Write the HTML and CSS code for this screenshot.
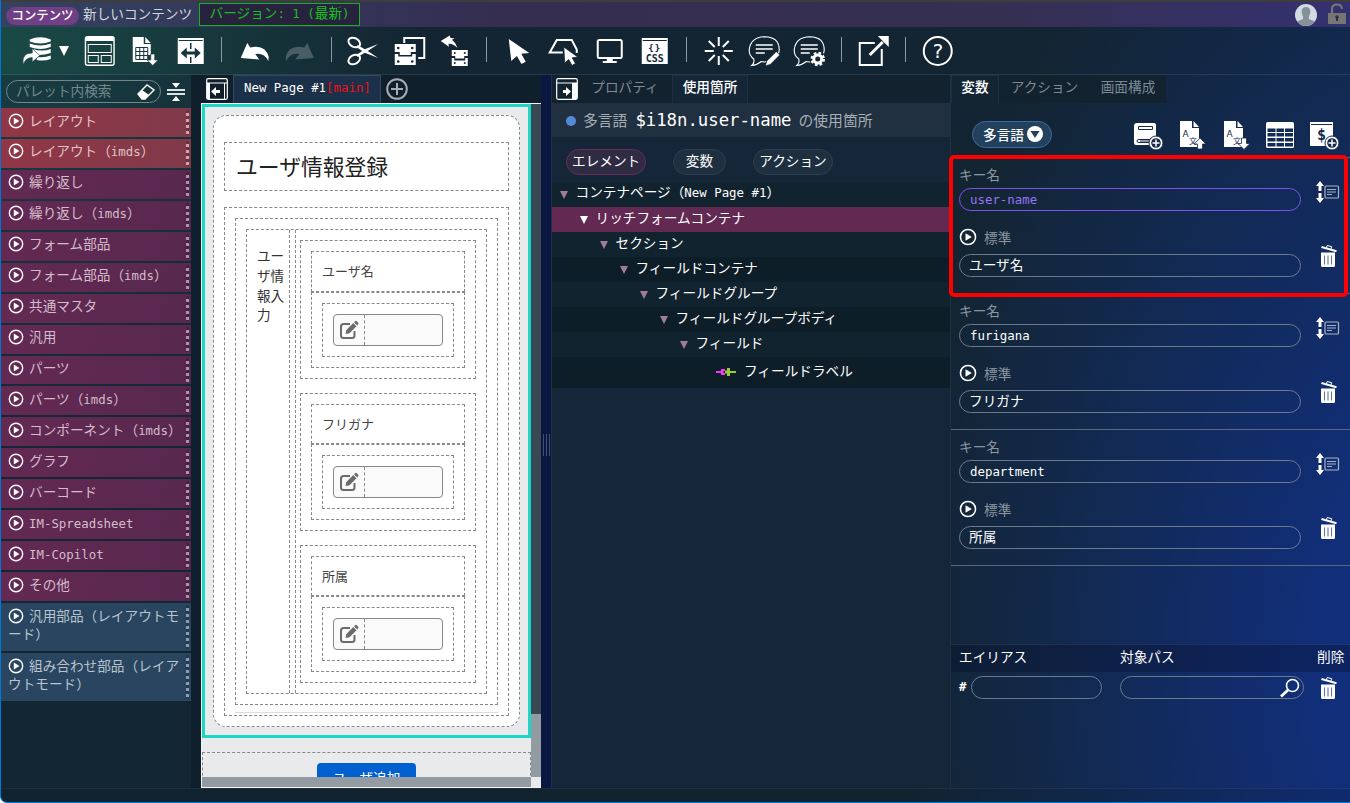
FILE: index.html
```html
<!DOCTYPE html>
<html lang="ja">
<head>
<meta charset="utf-8">
<title>新しいコンテンツ</title>
<link rel="stylesheet" href="styles.css">
</head>
<body>
<svg class="defs" aria-hidden="true">
  <symbol id="play" viewBox="0 0 16 16"><circle cx="8" cy="8" r="6.7" fill="none" stroke="currentColor" stroke-width="1.4"/><path d="M5.8 4.6v6.8L11.4 8z" fill="currentColor"/></symbol>
  <symbol id="trash" viewBox="0 0 18 24"><path d="M2 8.500h14v13q0 1.500-1.500 1.500h-11q-1.500 0-1.500-1.500z" fill="currentColor"/><path d="M5.500 11.500v9M9 11.500v9M12.500 11.500v9" stroke="#66759a" stroke-width="1.100"/><path d="M2.500 3l15 4.300" stroke="currentColor" stroke-width="2"/><path d="M7.500 3.800l.7-2.300 4.500 1.200-.7 2.500" fill="none" stroke="currentColor"/></symbol>
  <symbol id="sort" viewBox="0 0 24 22"><path d="M4 0l4 5H5.500v5h-3V5H0zM2.500 12h3v5H8l-4 5-4-5h2.500z" fill="currentColor"/><rect x="9" y="5" width="13.500" height="12" rx="1" fill="none" stroke="#a9b4c4" stroke-width="1.200"/><path d="M11 8.500h9M11 11h9M11 13.500h5" stroke="#a9b4c4"/></symbol>
  <symbol id="edit" viewBox="0 0 20 20"><path d="M11 4H4.500Q2 4 2 6.500v9Q2 18 4.500 18H13q2.500 0 2.500-2.500V11" fill="none" stroke="currentColor" stroke-width="2"/><path d="M6.500 14l.8-4 7-7 3.200 3.200-7 7zM15 2.300l1.300-1.300q.6-.5 1.200 0l1.800 1.800q.5.600 0 1.200L18.100 5.500z" fill="currentColor"/></symbol>
</svg>

<div class="app">
<header class="titlebar">
  <span class="badge">コンテンツ</span>
  <span class="doc-title">新しいコンテンツ</span>
  <span class="version">バージョン<i class="m">: 1 (</i>最新<i class="m">)</i></span>
  <span class="grow"></span>
  <svg class="avatar" viewBox="0 0 22 22"><defs><clipPath id="avatar-clip"><circle cx="11" cy="11" r="11"/></clipPath></defs><g clip-path="url(#avatar-clip)"><path fill="#d3dae2" d="M0 0h22v22H0z"/><path fill="#84919b" d="M11 3c3 0 4.600 2 4.400 5-.1 2-1 3-1.500 4.500v2.500l6 2.500v5H2v-5l6-2.500v-2.500C7.500 11 6.700 10 6.600 8 6.400 5 8 3 11 3z"/></g></svg>
  <svg class="lock" viewBox="0 0 20 22"><path d="M5 10V6q0-4.500 5-4.500Q14.500 1.500 15 6" fill="none" stroke="#777673" stroke-width="2"/><path fill="#777673" d="M1 10h18v11H1z"/><circle cx="10" cy="14" r="1.800" fill="#2c2b5e"/><path d="M9 14h2v4H9z" fill="#2c2b5e"/></svg>
</header>

<nav class="toolbar">
  <svg viewBox="21 35 32 32"><path d="M30 39.500q10.500-4.500 21 0v2q-10.500 4-21 0zM30 43.500q10.500 4 21 0v3.500q-10.500 4-21 0zM33 49q9 3 18 0v4q-6 2-12 2zM37 57q8 1 14-1.500v3.500q-7 2.500-14 1z"/><path d="M23.500 64.500q-2-11.500 9-11.500v-4.500l7.500 7-7.500 6.500v-4.500q-6.500 0-9 7z" stroke="#183c3f" stroke-width=".6"/></svg>
  <svg class="caret" viewBox="0 0 10 10"><path d="M0 0h10L5 10z"/></svg>
  <svg viewBox="84 35 32 32"><g fill="none" stroke="#fff"><rect x="85.700" y="36.700" width="28.600" height="28.600" rx="2" stroke-width="1.400"/><rect x="88.500" y="44.500" width="23" height="8"/><rect x="88.500" y="55.500" width="10" height="7"/><rect x="101.500" y="55.500" width="10" height="7"/></g><path d="M86 37h28v4H86z"/></svg>
  <svg viewBox="130 35 32 32"><path d="M134 37h11v7h7v11h-3v5h3v2h-18z"/><path d="M146.500 37l5.500 6h-5.500z"/><path d="M137 47.500h12v12h-12zM137 51.500h12M137 55.500h12M141 47.500v12M145 47.500v12" fill="none" stroke="#17373d"/><path d="M152 54h4v6h3.500L154 65.500 148.500 60h3.500z" stroke="#17373d" stroke-width=".7"/></svg>
  <svg viewBox="175 35 32 32"><path d="M178 38h26v26h-26z"/><path d="M179 40.500h24" stroke="#17353c"/><path d="M191 43v6M191 57v6" stroke="#17353c" stroke-width="1.500"/><path d="M181 53l6-5.500v4h8v-4l6 5.500-6 5.500v-4h-8v4z" fill="#17353c"/></svg>
  <i class="sep"></i>
  <svg viewBox="239 35 32 32"><path d="M241 58l6.500-15 3 4.500q15-3.500 18.500 9.500l-.5 4q-4-8.500-13-7l4 5.500z"/></svg>
  <svg class="off" viewBox="284 35 32 32"><path d="M314 58l-6.500-15-3 4.500q-15-3.500-18.500 9.500l.5 4q4-8.500 13-7l-4 5.500z"/></svg>
  <i class="sep"></i>
  <svg viewBox="348 35 32 32"><g fill="none" stroke="#fff" stroke-width="2"><ellipse cx="354.500" cy="42.500" rx="6.200" ry="4.300" transform="rotate(28 354.500 42.500)"/><ellipse cx="354.500" cy="59.500" rx="6.200" ry="4.300" transform="rotate(-28 354.500 59.500)"/></g><path d="M358 45l7 4.300 13.500-5.300-10.500 7 10.500 7-13.500-5.300-7 4.300-1.500-2 6-4-6-4z"/></svg>
  <svg viewBox="393 35 32 32"><path d="M403.500 43v-5h20v20h-6" fill="none" stroke="#fff" stroke-width="2"/><path d="M394 44h21v8h-5v3h-11v-3H394zM394 54h3.500v2.500h14V54h3.500v11h-21z"/><g fill="#142b36"><circle cx="397.500" cy="48" r="1.300"/><circle cx="411.500" cy="48" r="1.300"/><circle cx="397.500" cy="61.500" r="1.300"/><circle cx="411.500" cy="61.500" r="1.300"/></g></svg>
  <svg viewBox="439 35 32 32"><path d="M441 41l9-5.500.7 2.500 4 .2-2.500 1.500q4 3 5.500 8-5-4.500-9-4l.5 3z"/><path d="M452 50h16v6h-3.500v2.500h-9V56H452zM452 58h2.500v2.500h11V58h2.500v8h-16z"/><g fill="#142b36"><circle cx="455" cy="53" r="1"/><circle cx="465" cy="53" r="1"/><circle cx="455" cy="63" r="1"/><circle cx="465" cy="63" r="1"/></g></svg>
  <i class="sep"></i>
  <svg viewBox="503 35 32 32"><path d="M509 39l20.500 14-8 .7 4.500 8-4.300 2.300-4.500-8-5.700 5z"/></svg>
  <svg viewBox="549 35 32 32"><path d="M564 52.500h-13l7-12.500h15l5 9.500v3.500" fill="none" stroke="#fff" stroke-width="2"/><path d="M565 47l14 10-5.500.8 3.200 5.700-3.500 2-3.200-6-4 3.500z" stroke="#132733" stroke-width=".8"/></svg>
  <svg viewBox="594 35 32 32"><rect x="598" y="40" width="24" height="18" rx="1.500" fill="none" stroke="#fff" stroke-width="2"/><path d="M607 59h6v2h4v2h-14v-2h4z"/></svg>
  <svg viewBox="639 35 32 32"><path d="M642 38h26v26h-26z"/><path d="M643 40.500h24" stroke="#132733"/><text x="655" y="51" class="ico-brace">{}</text><text x="655" y="62" class="ico-css">CSS</text></svg>
  <i class="sep"></i>
  <svg viewBox="703 35 32 32"><path d="M719 37v9M719 56v9M705 51h9M724 51h9M709 41l6 6M723 55l6 6M729 41l-6 6M715 55l-6 6" stroke="#fff" stroke-width="2"/></svg>
  <svg viewBox="749 35 32 32"><path d="M754 59q-5-3.500-4.500-9.500Q751 37 765 36.700 779.500 37 779.500 50q-1 11-15 12l-3-.5q-4 3.500-9.500 4 3-2.500 2-6.500z" fill="none" stroke="#fff" stroke-width="1.100"/><path d="M756 45h17M756 49h17M756 53h9" stroke="#fff" stroke-width="1.700"/><path d="M765.500 66l1.500-5 9.500-9.500 3.500 3.500-9.500 9.500z" stroke="#132733" stroke-width=".8"/></svg>
  <svg viewBox="795 35 32 32"><path d="M800 59q-5-3.500-4.500-9.500Q797 37 811 36.700 825.500 37 825.500 50q-1 11-15 12l-3-.5q-4 3.500-9.500 4 3-2.500 2-6.500z" fill="none" stroke="#fff" stroke-width="1.100"/><path d="M802 45h17M802 49h17M802 53h9" stroke="#fff" stroke-width="1.700"/><circle cx="819" cy="59" r="8" fill="#132733"/><circle cx="819" cy="59" r="6" fill="none" stroke="#fff" stroke-width="2.500" stroke-dasharray="2.600 2.112"/><circle cx="819" cy="59" r="4" fill="none" stroke="#fff" stroke-width="3"/></svg>
  <i class="sep"></i>
  <svg viewBox="858 35 32 32"><path d="M875 43h-15v22h22V49" fill="none" stroke="#fff" stroke-width="2"/><path d="M870 55l13-13" stroke="#fff" stroke-width="3"/><path d="M878 36h11v11z"/></svg>
  <i class="sep"></i>
  <svg viewBox="922 35 32 32"><circle cx="938" cy="51" r="14" fill="none" stroke="#fff" stroke-width="2"/><text x="938" y="58" class="ico-help">?</text></svg>
</nav>

<main class="work">
  <aside class="palette">
    <div class="search-row">
      <div class="search"><span>パレット内検索</span><svg viewBox="0 0 18 16"><path d="M1 10L10 1l7 5-9 9H5z" fill="none" stroke="#fff" stroke-width="1.400"/><path d="M1 10l4-4 7 5-4 4H5z" fill="#fff"/></svg></div>
      <svg class="collapse" viewBox="0 0 18 18"><path d="M5 0h8L9 5zM5 18h8L9 13z" fill="#fff"/><path d="M0 7h18M0 11h18" stroke="#dce3e5" stroke-width="2"/></svg>
    </div>
    <ul class="groups">
      <li class="red"><svg><use href="#play"/></svg>レイアウト</li>
      <li class="red"><svg><use href="#play"/></svg>レイアウト（<i class="m">imds</i>）</li>
      <li><svg><use href="#play"/></svg>繰り返し</li>
      <li><svg><use href="#play"/></svg>繰り返し（<i class="m">imds</i>）</li>
      <li><svg><use href="#play"/></svg>フォーム部品</li>
      <li><svg><use href="#play"/></svg>フォーム部品（<i class="m">imds</i>）</li>
      <li><svg><use href="#play"/></svg>共通マスタ</li>
      <li><svg><use href="#play"/></svg>汎用</li>
      <li><svg><use href="#play"/></svg>パーツ</li>
      <li><svg><use href="#play"/></svg>パーツ（<i class="m">imds</i>）</li>
      <li><svg><use href="#play"/></svg>コンポーネント（<i class="m">imds</i>）</li>
      <li><svg><use href="#play"/></svg>グラフ</li>
      <li><svg><use href="#play"/></svg>バーコード</li>
      <li><svg><use href="#play"/></svg><i class="m">IM-Spreadsheet</i></li>
      <li><svg><use href="#play"/></svg><i class="m">IM-Copilot</i></li>
      <li><svg><use href="#play"/></svg>その他</li>
      <li class="blue"><svg><use href="#play"/></svg>汎用部品（レイアウトモ<br>ード）</li>
      <li class="blue"><svg><use href="#play"/></svg>組み合わせ部品（レイア<br>ウトモード）</li>
    </ul>
  </aside>
  <div class="gutter"></div>

  <section class="center">
    <div class="tabs">
      <svg class="dock" viewBox="0 0 22 22"><rect x=".7" y=".7" width="20.600" height="20.600" rx="1.500" fill="none" stroke="#fff" stroke-width="1.200"/><path d="M1 5h20M18.500 5v16" stroke="#fff" fill="none"/><path d="M1 5h3v16H1zM5 13.500l5-4.500v3h4v3h-4v3z" fill="#fff"/></svg>
      <div class="page-tab"><i class="m">New Page #1</i><i class="m main">[main]</i></div>
      <svg class="add" viewBox="0 0 22 22"><g fill="none" stroke="#a5acb1" stroke-width="2"><circle cx="11" cy="11" r="9.800"/><path d="M11 5v12M5 11h12"/></g></svg>
    </div>
    <div class="viewport">
      <div class="canvas">
        <div class="selected">
          <div class="card">
            <div class="dash heading">ユーザ情報登録</div>
            <div class="dash form">
              <div class="dash section">
                <div class="dash field-container">
                  <div class="side">ユー<br>ザ情<br>報入<br>力</div>
                  <div class="group-body">
                    <div class="dash group"><div class="dash label">ユーザ名</div><div class="dash cell"><div class="dash wrap"><div class="input"><span><svg><use href="#edit"/></svg></span></div></div></div></div>
                    <div class="dash group"><div class="dash label">フリガナ</div><div class="dash cell"><div class="dash wrap"><div class="input"><span><svg><use href="#edit"/></svg></span></div></div></div></div>
                    <div class="dash group"><div class="dash label">所属</div><div class="dash cell"><div class="dash wrap"><div class="input"><span><svg><use href="#edit"/></svg></span></div></div></div></div>
                  </div>
                </div>
              </div>
              <div class="rule"></div>
            </div>
          </div>
        </div>
        <div class="dash footer-box"><div class="submit">ユーザ追加</div></div>
      </div>
      <div class="vbar"><div class="vthumb"></div></div>
      <div class="hbar"></div>
      <div class="corner"></div>
    </div>
  </section>
  <div class="splitter"><i></i></div>

  <section class="usage">
    <div class="tabs">
      <svg class="dock" viewBox="0 0 22 22"><rect x=".7" y=".7" width="20.600" height="20.600" rx="1.500" fill="none" stroke="#fff" stroke-width="1.200"/><path d="M1 5h20" stroke="#fff"/><path d="M16 5h5v16h-5zM15 13.500L10 9v3H7v3h3v3z" fill="#fff"/></svg>
      <div class="tab props">プロパティ</div><div class="tab on places">使用箇所</div>
    </div>
    <div class="usage-head"><b></b><span>多言語</span><i class="m">$i18n.user-name</i><span>の使用箇所</span></div>
    <div class="chips"><span class="chip hot">エレメント</span><span class="chip">変数</span><span class="chip">アクション</span></div>
    <div class="tree">
      <div class="row l0"><s></s><span>コンテナページ（<i class="m">New Page #1</i>）</span></div>
      <div class="row l1 sel"><s></s>リッチフォームコンテナ</div>
      <div class="row l2"><s></s>セクション</div>
      <div class="row l3 odd"><s></s>フィールドコンテナ</div>
      <div class="row l4"><s></s>フィールドグループ</div>
      <div class="row l5 odd"><s></s>フィールドグループボディ</div>
      <div class="row l6"><s></s>フィールド</div>
      <div class="row leaf odd"><svg viewBox="0 0 20 10"><path d="M0 4h5V2h4v2H7.500v2H9v2H5V6H0z" fill="#f53df5"/><path d="M9 3.500h2V1h3v3h6v2h-6v3h-3V6.500H9z" fill="#9acd32"/></svg>フィールドラベル</div>
    </div>
  </section>

  <section class="vars">
    <div class="tabs"><div class="tab on v1">変数</div><div class="tab v2">アクション</div><div class="tab v3">画面構成</div></div>
    <div class="var-tools">
      <div class="lang">多言語<svg viewBox="0 0 16 16"><circle cx="8" cy="8" r="8" fill="#fff"/><path d="M3.500 5h9L8 12z" fill="#23405c"/></svg></div>
      <svg class="t1" viewBox="1133 120 32 32"><path d="M1137 123h17q2 0 2 2v20h-20q-2 0-2-2v-17q0-3 3-3z"/><path d="M1138.500 126.500h14v3h-14zM1155 139.500h-16q-2 0-2 1.500t2 1.500h16M1140 141h13" fill="none" stroke="#14294b"/><circle cx="1156" cy="143" r="7" stroke="#14294b"/><circle cx="1156" cy="143" r="4.800" fill="#14294b"/><path d="M1156 139.500v7M1152.500 143h7" stroke="#fff" stroke-width="1.500"/></svg>
      <svg class="t2" viewBox="1178 120 32 32"><path d="M1180 121h12v7h7v19h-19z"/><path d="M1193.500 121l5.500 6h-5.500z"/><text x="1182.500" y="137" class="ico-a">A</text><text x="1189" y="143.500" class="ico-k">文</text><path d="M1200 138l6 6h-3.500v5h-5v-5h-3.500z" stroke="#14294b" stroke-width=".8"/></svg>
      <svg class="t3" viewBox="1222 120 32 32"><path d="M1224 121h12v7h7v19h-19z"/><path d="M1237.500 121l5.500 6h-5.500z"/><text x="1226.500" y="137" class="ico-a">A</text><text x="1233" y="143.500" class="ico-k">文</text><path d="M1244 149.500l6-6h-3.500v-5.500h-5v5.500h-3.500z" stroke="#14294b" stroke-width=".8"/></svg>
      <svg class="t4" viewBox="1264 120 32 32"><rect x="1266" y="122" width="28" height="26" rx="1.500"/><path d="M1267.500 128.500h8v3.500h-8zM1276.500 128.500h7.500v3.500h-7.500zM1285 128.500h8v3.500h-8zM1267.500 133h8v3.500h-8zM1276.500 133h7.500v3.500h-7.500zM1285 133h8v3.500h-8zM1267.500 138h8v3.500h-8zM1276.500 138h7.500v3.500h-7.500zM1285 138h8v3.500h-8zM1267.500 143h8v3.500h-8zM1276.500 143h7.500v3.500h-7.500zM1285 143h8v3.500h-8z" fill="#132b57"/></svg>
      <svg class="t5" viewBox="1308 120 32 32"><path d="M1310 122h23v24h-23z"/><path d="M1311 124.500h21" stroke="#14294b"/><text x="1321.500" y="140" class="ico-d">$</text><circle cx="1332" cy="143" r="7" stroke="#14294b"/><circle cx="1332" cy="143" r="4.800" fill="#14294b"/><path d="M1332 139.500v7M1328.500 143h7" stroke="#fff" stroke-width="1.500"/></svg>
    </div>
    <div class="entries">
      <div class="entry first"><div class="fields"><label>キー名</label><div class="box key active"><i class="m">user-name</i></div><div class="std"><svg><use href="#play"/></svg>標準</div><div class="box">ユーザ名</div></div><div class="acts"><svg class="sort"><use href="#sort"/></svg><svg class="trash"><use href="#trash"/></svg></div></div>
      <div class="entry"><div class="fields"><label>キー名</label><div class="box key"><i class="m">furigana</i></div><div class="std"><svg><use href="#play"/></svg>標準</div><div class="box">フリガナ</div></div><div class="acts"><svg class="sort"><use href="#sort"/></svg><svg class="trash"><use href="#trash"/></svg></div></div>
      <div class="entry"><div class="fields"><label>キー名</label><div class="box key"><i class="m">department</i></div><div class="std"><svg><use href="#play"/></svg>標準</div><div class="box">所属</div></div><div class="acts"><svg class="sort"><use href="#sort"/></svg><svg class="trash"><use href="#trash"/></svg></div></div>
      <div class="callout"></div>
    </div>
    <div class="alias-head"><span>エイリアス</span><span>対象パス</span><span>削除</span></div>
    <div class="alias-row"><i class="m hash">#</i><div class="box a1"></div><div class="box a2"><svg viewBox="0 0 20 20"><circle cx="12.500" cy="7.500" r="6" fill="none" stroke="#fff" stroke-width="1.600"/><path d="M8 12l-7 6.500" stroke="#fff" stroke-width="2.800"/></svg></div><svg class="trash"><use href="#trash"/></svg></div>
  </section>
</main>
<footer class="status"></footer>
</div>
</body>
</html>
```
FILE: styles.css
```css
* { box-sizing: border-box; }
body { margin: 0; width: 1350px; height: 803px; overflow: hidden; background: #fff; }
.defs { display: none; }
svg { display: block; flex: none; }
i { font-style: normal; }
.grow { flex: 1; }
.app {
  height: 803px; display: flex; flex-direction: column;
  border-left: 1px solid #0078d7; border-bottom: 1px solid #0078d7; border-radius: 0 0 0 7px;
  overflow: hidden; color: #fff;
  font: 13.65px/18px "Noto Sans CJK JP", sans-serif; white-space: nowrap;
  background:
    radial-gradient(ellipse 420px 420px at 0 50px, #1a4a46 0%, rgba(26,74,70,0) 100%),
    radial-gradient(ellipse 540px 900px at 1440px 660px, #113084 0%, rgba(17,48,132,.85) 25%, rgba(17,48,132,0) 100%),
    #132532;
}
.m { font-family: "DejaVu Sans Mono", monospace; font-size: 12.4px; }

/* title bar */
.titlebar {
  height: 27px; flex: none; display: flex; align-items: center; padding-left: 5px; padding-top: 2px;
  border-top: 2px solid #3d3d3f;
  background: linear-gradient(90deg, #34425f 0, #333256 380px, #352e50 500px, #352f51 1000px, #343170 1350px);
}
.badge { width: 73px; height: 18px; margin-top: 1px; border-radius: 9px; background: #713f86; text-align: center; font-weight: 500; font-size: 12.4px; line-height: 16px; }
.doc-title { margin-left: 4px; width: 116px; color: #d4d6de; line-height: 20px; margin-top: -6px; }
.version { height: 23px; width: 161px; margin-top: -2px; border: 1px solid #16b31b; background: #27233f; color: #14c419; text-align: center; line-height: 17px; }
.avatar { width: 22px; height: 22px; margin: -2px 10px 0 0; }
.lock { width: 20px; height: 22px; margin: -3px 3px 0 0; }

/* toolbar */
.toolbar { height: 48px; flex: none; display: flex; align-items: center; padding-left: 12.500px; border-bottom: 1px solid rgba(255,255,255,.09); }
.toolbar svg { width: 45.5px; height: 32px; fill: #fff; }
.toolbar .caret { width: 10px; height: 10px; margin: 0 7.5px 0 .3px; }
.toolbar .off { opacity: .22; }
.sep { width: 18.4px; height: 25px; flex: none; margin-top: -2px; background: linear-gradient(#8d999f, #8d999f) 8px 0 / 1px 100% no-repeat; }
.ico-brace { font: 700 9px "DejaVu Sans Mono", monospace; text-anchor: middle; letter-spacing: 1px; fill: #132733; }
.ico-css { font: 700 10px "DejaVu Sans Mono", monospace; text-anchor: middle; fill: #132733; }
.ico-help { font: 400 20px "DejaVu Sans Mono", monospace; text-anchor: middle; }

.work { height: 713px; flex: none; display: flex; }
.status { flex: 1; background: rgba(10,25,35,.12); border-top: 1px solid rgba(255,255,255,.06); }

/* palette */
.palette { width: 190px; background: rgba(20,40,58,.35); }
.search-row { display: flex; height: 33px; padding: 5px 0 0 5px; }
.search { width: 155px; height: 23px; border: 1px solid #75868a; border-radius: 12px; padding: 0 5px 0 9px; display: flex; justify-content: space-between; align-items: center; color: #76888c; line-height: 20px; }
.search span { margin-top: -4px; }
.search svg { width: 18px; height: 16px; }
.collapse { width: 18px; height: 18px; margin: 3px 0 0 6px; }
.groups { list-style: none; margin: 0; padding: 0; }
.groups li {
  min-height: 28.95px; margin-bottom: 2px; padding: 2.500px 8px 0 7px; color: #d4bccb; line-height: 18.500px;
  background: repeating-linear-gradient(rgba(0,0,0,.18) 0 3px, #b192ad 3px 6px) 185px 2px / 3px calc(100% - 4px) no-repeat, linear-gradient(110deg, #642953, #57284f);
}
.groups li.red { color: #e2c3c7; background: repeating-linear-gradient(rgba(0,0,0,.18) 0 3px, #d3a5ac 3px 6px) 185px 2px / 3px calc(100% - 4px) no-repeat, linear-gradient(100deg, #923646, #7f3a4a); }
.groups li.blue { min-height: 48px; color: #b8c4ce; background: repeating-linear-gradient(rgba(0,0,0,.18) 0 3px, #8ba0b0 3px 6px) 185px 2px / 3px calc(100% - 4px) no-repeat, #294560; }
.groups svg { display: inline-block; width: 16px; height: 16px; vertical-align: -3px; margin-right: 5px; color: #fff; }
.gutter { width: 10px; background: #0f1f2c; }

/* page canvas */
.center { width: 340px; display: flex; flex-direction: column; }
.tabs { height: 28px; flex: none; display: flex; }
.center .tabs { background: #0f1f2c; }
.dock { width: 22px; height: 22px; margin-top: 3px; }
.center .dock { margin-left: 5px; }
.page-tab { width: 148px; margin-left: 5px; padding-left: 10px; border: 1px solid #33485c; border-bottom: 0; background: #1b3049; line-height: 21px; }
.main { color: #f10f17; }
.add { width: 22px; height: 22px; margin: 3px 0 0 5px; }
.viewport { height: 685px; display: grid; grid-template: 673px 10px / 329px 10px; border: solid #f2f4f5; border-width: 1px 0 1px 1px; background: #e8eaec; color: #333; }
.canvas { overflow: hidden; background: #e8eaec; }
.selected { height: 634px; border: 3px solid #1dd6c4; padding: 8px; }
.card { height: 612px; background: #fff; border: 1px dashed #888; border-radius: 13px; padding: 26px 10px 0; }
.dash { border: 1px dashed #888; }
.heading { height: 49px; padding-left: 11px; font-size: 21.800px; line-height: 46px; color: #222; }
.form { height: 509px; margin-top: 16px; padding: 10px 10px 0; }
.section { height: 487px; padding: 10px 10px 0; }
.field-container { height: 465px; display: flex; }
.side { width: 43px; padding: 16px 0 0 10px; border-right: 1px dashed #888; font-size: 13.600px; line-height: 19.800px; }
.group-body { margin-left: 5px; border-left: 1px dashed #888; padding: 10.200px 0 0 4px; }
.group { width: 176px; height: 138.400px; margin-bottom: 14px; padding: 10px 10px 0; }
.label { height: 40.400px; padding-left: 10px; font-size: 13px; line-height: 37px; color: #444; }
.cell { height: 76px; padding: 10px 10px 0; }
.wrap { height: 54px; padding: 10px 10px 0; }
.input { height: 32px; border: 1px solid #888; border-radius: 4px; background: #fafafa; }
.input span { display: block; width: 31px; height: 30px; border-right: 1px dashed #888; padding: 5px 0 0 5px; }
.input svg { width: 20px; height: 20px; color: #6b6b6b; }
.rule { height: 1px; margin-top: 7px; background: #dcdcdc; }
.footer-box { margin-top: 14px; height: 60px; padding-top: 10px; }
.submit { width: 99px; height: 32px; margin: 0 auto; border-radius: 4px; background: #0060cf; color: #fff; text-align: center; font-size: 13.600px; line-height: 28px; }
.vbar { background: #384855; padding-top: 610px; }
.vthumb { height: 63px; background: #939ba2; }
.hbar { background: #939ba2; }
.corner { background: #e8eaec; }
.splitter { width: 10px; background: #0a1742; display: flex; align-items: center; justify-content: center; }
.splitter i { width: 7px; height: 22px; margin-top: 26px; background: repeating-linear-gradient(90deg, #44506f 0 1px, transparent 1px 3px); }

/* usage panel */
.usage { width: 400px; background: #142637; border-left: 1px solid #202f41; border-right: 1px solid #202f41; }
.usage .tabs { background: #12222f; padding-left: 4px; }
.tab { color: #7e8a93; line-height: 22px; text-align: center; }
.tab.on { color: #fff; font-weight: 500; background: #142637; border: 1px solid #213040; border-bottom: 0; line-height: 20px; }
.props { width: 94px; }
.places { width: 76px; }
.usage-head { height: 34px; background: #203040; display: flex; align-items: center; padding-left: 14px; color: #a5adb5; font-size: 14.800px; }
.usage-head b { width: 10px; height: 10px; border-radius: 5px; background: #528cd6; margin-right: 7px; margin-top: 2px; }
.usage-head .m { font-size: 17.300px; color: #fff; margin: 0 7px 0 8px; }
.chips { height: 45px; display: flex; padding: 12px 0 0 14px; gap: 27px; }
.chip { height: 26px; padding: 0 5px; width: 80px; border: 1px solid #2e3f4f; border-radius: 13px; background: #1e2f40; text-align: center; line-height: 20px; }
.chip:nth-child(2) { width: 53px; }
.chip.hot { background: #2f2b42; border-color: #6a2b5a; }
.row { height: 25px; display: flex; align-items: center; background: #11232f; padding-bottom: 5px; }
.odd { background: #0e1e29; }
.sel { background: #622953; }
.row s { border: 4.500px solid transparent; border-top: 8px solid #9e7d95; border-bottom: 0; margin: 5px 8px 0 0; }
.sel s { border-top-color: #fff; }
.l0 { padding-left: 7.500px; } .l1 { padding-left: 27.500px; } .l2 { padding-left: 47.500px; } .l3 { padding-left: 67.500px; }
.l4 { padding-left: 87.500px; } .l5 { padding-left: 107.500px; } .l6 { padding-left: 127.500px; }
.leaf { height: 31px; padding-left: 164px; }
.leaf svg { width: 20px; height: 10px; margin: 3px 8px 0 0; }

/* variables panel */
.vars { width: 399px; display: flex; flex-direction: column; }
.v1 { width: 48px; background: none !important; }
.v2, .v3 { background: #12222f; }
.v2 { width: 91px; }
.v3 { width: 76px; }
.var-tools { height: 54px; flex: none; display: flex; padding: 17px 0 0 21px; fill: #fff; }
.var-tools > svg { width: 32px; height: 32px; }
.lang { width: 80px; height: 27px; margin: 1px 81px 0 0; border: 1px solid #3c6ba4; border-radius: 14px; background: #23405c; display: flex; align-items: center; padding: 0 0 1px 10px; font-weight: 500; }
.lang svg { width: 16px; height: 16px; margin-left: 3px; }
.t2 { margin-left: 13px; } .t3 { margin-left: 12px; } .t4 { margin-left: 10px; } .t5 { margin-left: 12px; }
.ico-a { font: 9px "DejaVu Sans", sans-serif; fill: #14294b; }
.ico-k { font: 8px "Noto Sans CJK JP", sans-serif; fill: #14294b; }
.ico-d { font: 700 15px "DejaVu Sans Mono", monospace; text-anchor: middle; fill: #14294b; }
.entries { position: relative; height: 487px; flex: none; }
.entry { height: 136px; border-bottom: 1px solid #59677f; display: flex; padding: 8px 0 0 8px; }
.entry.first { border-top: 1px solid #59677f; height: 137px; }
.callout { position: absolute; left: -2px; top: -2px; width: 399px; height: 142px; border: 4px solid #fe0000; border-radius: 5px; }
.fields { width: 342px; }
.entry label { display: block; height: 22px; color: #8d97a1; line-height: 16px; }
.box { height: 23px; border: 1px solid #6c7a8e; border-radius: 12px; padding-left: 9px; line-height: 18px; }
.key { line-height: 19px; padding-left: 10px; }
.active { border-color: #7c52ee; color: #9574f5; }
.std { display: flex; height: 43px; align-items: center; color: #8d97a1; padding-top: 9px; }
.std svg { width: 18px; height: 18px; margin: 0 7px 0 0; color: #fff; }
.acts { padding: 15px 0 0 15px; }
.sort { width: 24px; height: 22px; }
.trash { width: 18px; height: 24px; margin: 41px 0 0 3px; }
.alias-head { height: 28px; display: flex; background: rgba(5,12,40,.32); border-top: 1px solid rgba(255,255,255,.08); padding-left: 8px; line-height: 22px; }
.alias-head span:nth-child(1) { width: 161px; }
.alias-head span:nth-child(2) { width: 197px; }
.alias-row { display: flex; padding: 4px 0 0 8px; line-height: 22px; }
.hash { font-weight: 700; }
.a1 { width: 131px; margin-left: 4.500px; }
.a2 { width: 184px; margin-left: 18px; display: flex; justify-content: flex-end; padding-right: 3px; }
.a2 svg { width: 20px; height: 20px; margin-top: 1px; }
.alias-row .trash { margin: 0 0 0 15px; }
```
